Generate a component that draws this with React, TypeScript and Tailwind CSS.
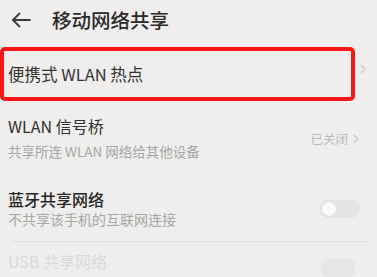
import React from "react";

export default function App() {
  return (
    <div
      className="w-[377px] h-[277px] overflow-hidden bg-[#efeeec] text-[#2b2b2b]"
      style={{ fontFamily: '"Noto Sans CJK SC", "Noto Sans", sans-serif' }}
    >
      {/* Header */}
      <div className="flex items-center h-[40px]">
        <svg
          className="ml-[11px]"
          width="20"
          height="16"
          viewBox="0 0 20 16"
          fill="none"
          stroke="#3a3a3a"
          strokeWidth="1.8"
          strokeLinecap="round"
          strokeLinejoin="round"
        >
          <path d="M19 8H2" />
          <path d="M8.5 1.5L2 8l6.5 6.5" />
        </svg>
        <span className="ml-[21px] text-[19.5px] leading-[24px] font-medium text-[#2a2a2a]">
          移动网络共享
        </span>
      </div>

      {/* Highlighted row */}
      <div className="flex mt-[7px]">
        <div className="w-[355px] h-[54px] border-[4px] border-[#f41818] rounded-[5px] flex items-center pl-[4px]">
          <span className="text-[16.5px] leading-[20px] text-[#333]">便携式 WLAN 热点</span>
        </div>
        <svg className="ml-[5px] mt-[17px]" width="6" height="10" viewBox="0 0 6 10" fill="none" stroke="#c8c8c6" strokeWidth="1.2">
          <path d="M1 1l4 4-4 4" />
        </svg>
      </div>

      {/* WLAN 信号桥 */}
      <div className="flex items-center mt-[15px] pl-[8px] pr-[18px]">
        <div className="flex-1 flex flex-col">
          <span className="text-[16px] leading-[20px] text-[#2e2e2e]">WLAN 信号桥</span>
          <span className="mt-[6px] text-[13.5px] leading-[18px] text-[#a6a6a4]">共享所连 WLAN 网络给其他设备</span>
        </div>
        <div className="flex items-center gap-[5px] mt-[2px] text-[12.5px] leading-[16px] text-[#bdbdbb]">
          <span>已关闭</span>
          <svg width="6" height="10" viewBox="0 0 6 10" fill="none" stroke="#c4c4c4" strokeWidth="1.2">
            <path d="M1 1l4 4-4 4" />
          </svg>
        </div>
      </div>

      {/* 蓝牙共享网络 */}
      <div className="flex items-center mt-[29px] pl-[8px] pr-[17px]">
        <div className="flex-1 flex flex-col">
          <span className="text-[16px] leading-[20px] font-medium text-[#262626]">蓝牙共享网络</span>
          <span className="mt-[1px] text-[14px] leading-[18px] text-[#a6a6a4]">不共享该手机的互联网连接</span>
        </div>
        <div className="w-[40px] h-[18px] rounded-full bg-[#e4e4e2] flex items-center pl-[1px]">
          <div className="w-[16px] h-[16px] rounded-full bg-[#fafafa] border border-[#dededc]" />
        </div>
      </div>

      {/* Divider */}
      <div className="mt-[13px] ml-[12px] mr-[10px] h-[1px] bg-[#e0e0de]" />

      {/* USB */}
      <div className="flex items-start mt-[9px] pl-[8px] pr-[22px]">
        <span className="flex-1 text-[16px] leading-[20px] text-[#dadad8]">USB 共享网络</span>
        <div className="mt-[8px] w-[34px] h-[18px] rounded-[6px] bg-[#e6e6e4]" />
      </div>
    </div>
  );
}
